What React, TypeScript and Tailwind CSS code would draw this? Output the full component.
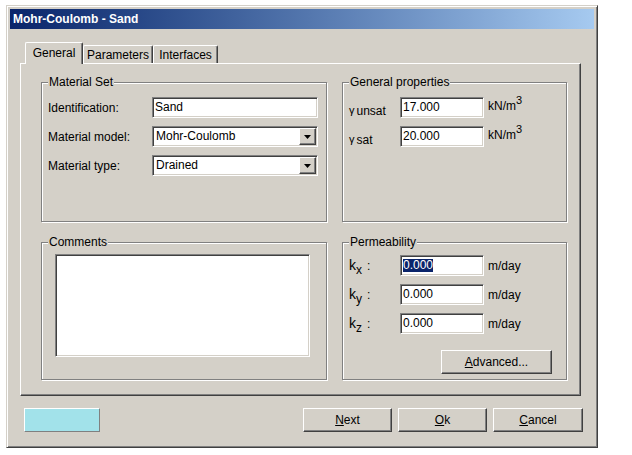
import React from "react";

const sunken =
  "border border-t-[#808080] border-l-[#808080] border-r-white border-b-white shadow-[inset_1px_1px_0_#404040,inset_-1px_-1px_0_#d4d0c8]";
const raised =
  "border border-t-white border-l-white border-r-[#404040] border-b-[#404040] shadow-[inset_-1px_-1px_0_#808080]";

function Group({
  title,
  className,
  children,
}: {
  title: string;
  className: string;
  children?: React.ReactNode;
}) {
  return (
    <div
      className={
        "relative border border-[#808080] shadow-[inset_1px_1px_0_#fff,1px_1px_0_#fff] " +
        className
      }
    >
      <span className="absolute left-[6px] -top-[8px] bg-[#d4d0c8] px-px leading-[14px]">
        {title}
      </span>
      {children}
    </div>
  );
}

function TextBox({
  value,
  className,
  selected,
}: {
  value: string;
  className: string;
  selected?: boolean;
}) {
  return (
    <div className={"h-[21px] bg-white flex items-center pl-[2px] " + sunken + " " + className}>
      {selected ? (
        <span className="bg-[#0a246a] text-white leading-[13px]">{value}</span>
      ) : (
        <span className="leading-[13px]">{value}</span>
      )}
    </div>
  );
}

function Combo({ value }: { value: string }) {
  return (
    <div className={"w-[166px] h-[21px] bg-white flex items-center p-px " + sunken}>
      <span className="flex-1 pl-[2px] leading-[13px]">{value}</span>
      <div
        className={
          "w-[17px] h-[17px] bg-[#d4d0c8] flex items-center justify-center " + raised
        }
      >
        <svg width="7" height="4" viewBox="0 0 7 4">
          <path d="M0 0h7L3.5 4z" fill="#000" />
        </svg>
      </div>
    </div>
  );
}

function Button({
  children,
  className,
}: {
  children: React.ReactNode;
  className: string;
}) {
  return (
    <div
      className={
        "h-[24px] bg-[#d4d0c8] flex items-center justify-center " + raised + " " + className
      }
    >
      {children}
    </div>
  );
}

function Tab({ label, selected, width }: { label: string; selected?: boolean; width: string }) {
  return (
    <div
      className={
        "flex items-center justify-center bg-[#d4d0c8] border-l border-t border-r border-b-0 border-l-white border-t-white border-r-[#404040] rounded-t-[2px] shadow-[inset_-1px_0_0_#808080] " +
        width +
        (selected ? " relative z-10 h-[22px] -mb-px pb-[2px]" : " h-[18px]")
      }
    >
      {label}
    </div>
  );
}

function Unit() {
  return (
    <span className="ml-[4px] relative -top-[2px]">
      kN/m<span className="text-[11px] relative -top-[6px]">3</span>
    </span>
  );
}

export default function App() {
  return (
    <div className="w-[632px] h-[455px] bg-white pt-[5px] pl-[6px] text-[12px] text-black font-['Liberation_Sans',Arial,sans-serif]">
      <div className="w-[592px] h-[443px] bg-[#d4d0c8] border border-t-[#d4d0c8] border-l-[#d4d0c8] border-r-[#404040] border-b-[#404040] shadow-[inset_1px_1px_0_#fff,inset_-1px_-1px_0_#808080] p-[3px]">
        <div className="h-[20px] flex items-center pl-[3px] text-white font-bold text-[12px] bg-linear-to-r from-[#0a246a] to-[#a6caf0]">
          Mohr-Coulomb - Sand
        </div>

        <div className="ml-[10px] mt-[13px] w-[561px]">
          <div className="flex items-end h-[21px] pl-[5px]">
            <Tab label="General" selected width="w-[58px]" />
            <Tab label="Parameters" width="w-[70px]" />
            <Tab label="Interfaces" width="w-[65px]" />
          </div>
          <div
            className={
              "h-[333px] border border-t-white border-l-white border-r-[#404040] border-b-[#404040] shadow-[inset_-1px_-1px_0_#808080] pl-[20px] pt-[18px]"
            }
          >
            <div className="grid grid-cols-[286px_225px] grid-rows-[140px_138px] gap-x-[15px] gap-y-[20px]">
              <Group title="Material Set" className="pl-[6px] pt-[14px] flex flex-col gap-[8px]">
                <div className="flex items-center h-[21px]">
                  <span className="w-[104px]">Identification:</span>
                  <TextBox value="Sand" className="w-[166px]" />
                </div>
                <div className="flex items-center h-[21px]">
                  <span className="w-[104px]">Material model:</span>
                  <Combo value="Mohr-Coulomb" />
                </div>
                <div className="flex items-center h-[21px]">
                  <span className="w-[104px]">Material type:</span>
                  <Combo value="Drained" />
                </div>
              </Group>

              <Group title="General properties" className="pl-[6px] pt-[14px] flex flex-col gap-[8px]">
                <div className="flex items-center h-[21px]">
                  <span className="w-[51px] flex items-baseline">
                    <span className="text-[11px] relative top-[2px]">γ</span>
                    <span className="relative top-[3px] ml-[2px]">unsat</span>
                  </span>
                  <TextBox value="17.000" className="w-[84px]" />
                  <Unit />
                </div>
                <div className="flex items-center h-[21px]">
                  <span className="w-[51px] flex items-baseline">
                    <span className="text-[11px] relative top-[2px]">γ</span>
                    <span className="relative top-[3px] ml-[2px]">sat</span>
                  </span>
                  <TextBox value="20.000" className="w-[84px]" />
                  <Unit />
                </div>
              </Group>

              <Group title="Comments" className="pl-[13px] pt-[11px]">
                <div className={"w-[255px] h-[103px] bg-white " + sunken} />
              </Group>

              <Group title="Permeability" className="pl-[6px] pt-[12px] flex flex-col">
                {["x", "y", "z"].map((s, i) => (
                  <div key={s} className={"flex items-center h-[21px] " + (i > 0 ? "mt-[8px]" : "")}>
                    <span className="w-[51px] flex items-baseline">
                      <span className="text-[14px]">k</span>
                      <span className="relative top-[4px]">{s}</span>
                      <span className="ml-[5px]">:</span>
                    </span>
                    <TextBox value="0.000" className="w-[84px]" selected={i === 0} />
                    <span className="ml-[4px]">m/day</span>
                  </div>
                ))}
                <div className="flex mt-[16px] pl-[92px]">
                  <Button className="w-[111px] h-[22px]">
                    <span>
                      <span className="underline">A</span>dvanced...
                    </span>
                  </Button>
                </div>
              </Group>
            </div>
          </div>
        </div>

        <div className="ml-[14px] mt-[12px] w-[559px] flex">
          <div className="w-[76px] h-[24px] bg-[#a2e2ea] border border-t-white border-l-white border-r-[#808080] border-b-[#808080]" />
          <div className="ml-auto flex gap-[6px]">
            <Button className="w-[89px]">
              <span>
                <span className="underline">N</span>ext
              </span>
            </Button>
            <Button className="w-[89px]">
              <span>
                <span className="underline">O</span>k
              </span>
            </Button>
            <Button className="w-[90px]">
              <span>
                <span className="underline">C</span>ancel
              </span>
            </Button>
          </div>
        </div>
      </div>
    </div>
  );
}
